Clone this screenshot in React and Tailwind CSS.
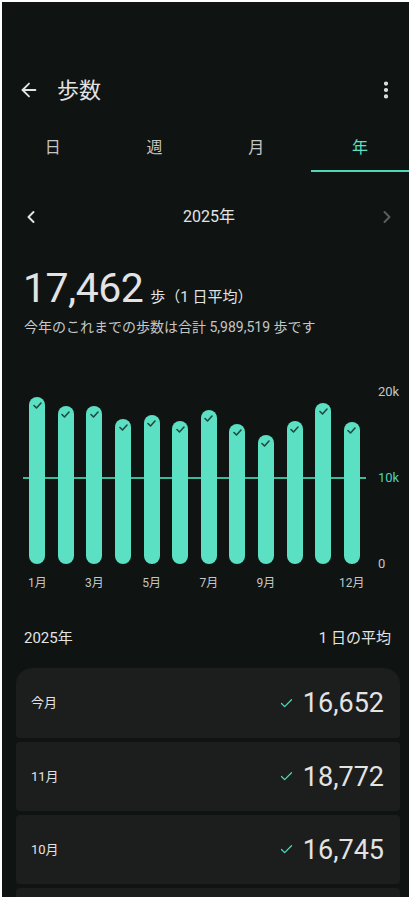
import React from 'react';
import { ArrowLeft, ChevronLeft, ChevronRight, EllipsisVertical, Check } from 'lucide-react';

const font = { fontFamily: 'Roboto, "Noto Sans CJK JP", sans-serif' };

// 月ごとの棒の高さ(px)
const bars = [167, 158, 158, 145, 149, 143, 154, 140, 129, 143, 161, 142];
const labels = ['1月', '', '3月', '', '5月', '', '7月', '', '9月', '', '', '12月'];

const months = [
  { name: '今月', value: '16,652' },
  { name: '11月', value: '18,772' },
  { name: '10月', value: '16,745' },
];

function BarCheck() {
  return (
    <svg width="9" height="7" viewBox="0 0 9 7" className="mt-[5px]">
      <polyline points="1,3.5 3.5,6 8,1" fill="none" stroke="#1e4a3f" strokeWidth="1.6" strokeLinecap="round" strokeLinejoin="round" />
    </svg>
  );
}

export default function App() {
  return (
    <div className="min-h-screen bg-white p-[2px]" style={font}>
      <div className="h-[895px] overflow-hidden bg-[#0f1312] pt-[60px] text-[#e3e3e3]">
        {/* ヘッダー */}
        <div className="flex h-14 items-center pl-[16px] pr-[12px]">
          <ArrowLeft size={22} strokeWidth={2} className="text-[#e3e3e3]" />
          <h1 className="ml-[17px] text-[22px] font-normal">歩数</h1>
          <div className="flex-1" />
          <EllipsisVertical size={22} strokeWidth={2.6} />
        </div>

        {/* タブ */}
        <div className="grid h-[54px] grid-cols-4">
          {['日', '週', '月', '年'].map((t, i) => (
            <div
              key={t}
              className={
                i === 3
                  ? 'ml-[4px] flex items-center justify-center border-b-2 border-[#4fd8b8] pt-[8px] text-[16px] text-[#5be0c3]'
                  : 'flex items-center justify-center border-b-2 border-transparent pt-[8px] text-[16px] text-[#c4c7c5]'
              }
            >
              {t}
            </div>
          ))}
        </div>

        {/* 年ナビ */}
        <div className="flex h-[90px] items-center justify-between pl-[19px] pr-[12px]">
          <ChevronLeft size={20} strokeWidth={2.4} className="text-[#e3e3e3]" />
          <span className="text-[16px] font-normal">2025年</span>
          <ChevronRight size={20} strokeWidth={2.4} className="text-[#5a5f5d]" />
        </div>

        {/* 平均 */}
        <div className="mt-[2px] flex items-baseline pl-[21px]">
          <span className="text-[41px] leading-[48px] tracking-[-0.5px]">17,462</span>
          <span className="ml-[7px] text-[15px] text-[#e3e3e3]">歩（1 日平均）</span>
        </div>
        <p className="mt-[5px] pl-[22px] text-[14px] leading-[20px] text-[#c4c7c5]">
          今年のこれまでの歩数は合計 5,989,519 歩です
        </p>

        {/* グラフ */}
        <div className="mt-[47px] flex items-start pl-[21px]">
          <div className="w-[343px]">
            <div className="relative mt-[8px] h-[172px]">
              <div className="absolute left-0 right-0 top-[85px] h-[2px] bg-[#3fb99c]" />
              <div className="relative grid h-full grid-cols-12 items-end">
                {bars.map((h, i) => (
                  <div key={i} className="flex justify-center">
                    <div
                      className="flex w-[16px] justify-center rounded-full bg-[#5be0c3]"
                      style={{ height: h }}
                    >
                      <BarCheck />
                    </div>
                  </div>
                ))}
              </div>
            </div>
            <div className="mt-[11px] grid grid-cols-12">
              {labels.map((l, i) => (
                <span key={i} className="text-center text-[12px] leading-4 text-[#c4c7c5]">
                  {l}
                </span>
              ))}
            </div>
          </div>
          <div className="ml-[12px] flex h-[188px] flex-col justify-between text-[13px] leading-4">
            <span className="text-[#c4c7c5]">20k</span>
            <span className="text-[#4fd1b3]">10k</span>
            <span className="text-[#c4c7c5]">0</span>
          </div>
        </div>

        {/* 一覧 */}
        <div className="mt-[37px] flex items-center justify-between pl-[22px] pr-[18px] text-[15px] leading-5">
          <span>2025年</span>
          <span>1 日の平均</span>
        </div>

        <div className="ml-[14px] mr-[9px] mt-[20px] flex flex-col gap-[4px]">
          {months.map((m, i) => (
            <div
              key={m.name}
              className={
                i === 0
                  ? 'flex h-[70px] items-center justify-between rounded-b-[4px] rounded-t-[16px] bg-[#1c1d1d] pl-[15px] pr-[16px]'
                  : 'flex h-[69px] items-center justify-between rounded-[4px] bg-[#1c1d1d] pl-[15px] pr-[16px]'
              }
            >
              <span className="text-[13px]">{m.name}</span>
              <div className="flex items-center">
                <Check size={15} strokeWidth={2} className="text-[#4fd8b8]" />
                <span className="ml-[9px] text-[27px] leading-8">{m.value}</span>
              </div>
            </div>
          ))}
          <div className="h-[69px] rounded-[4px] bg-[#1c1d1d]" />
        </div>
      </div>
    </div>
  );
}
